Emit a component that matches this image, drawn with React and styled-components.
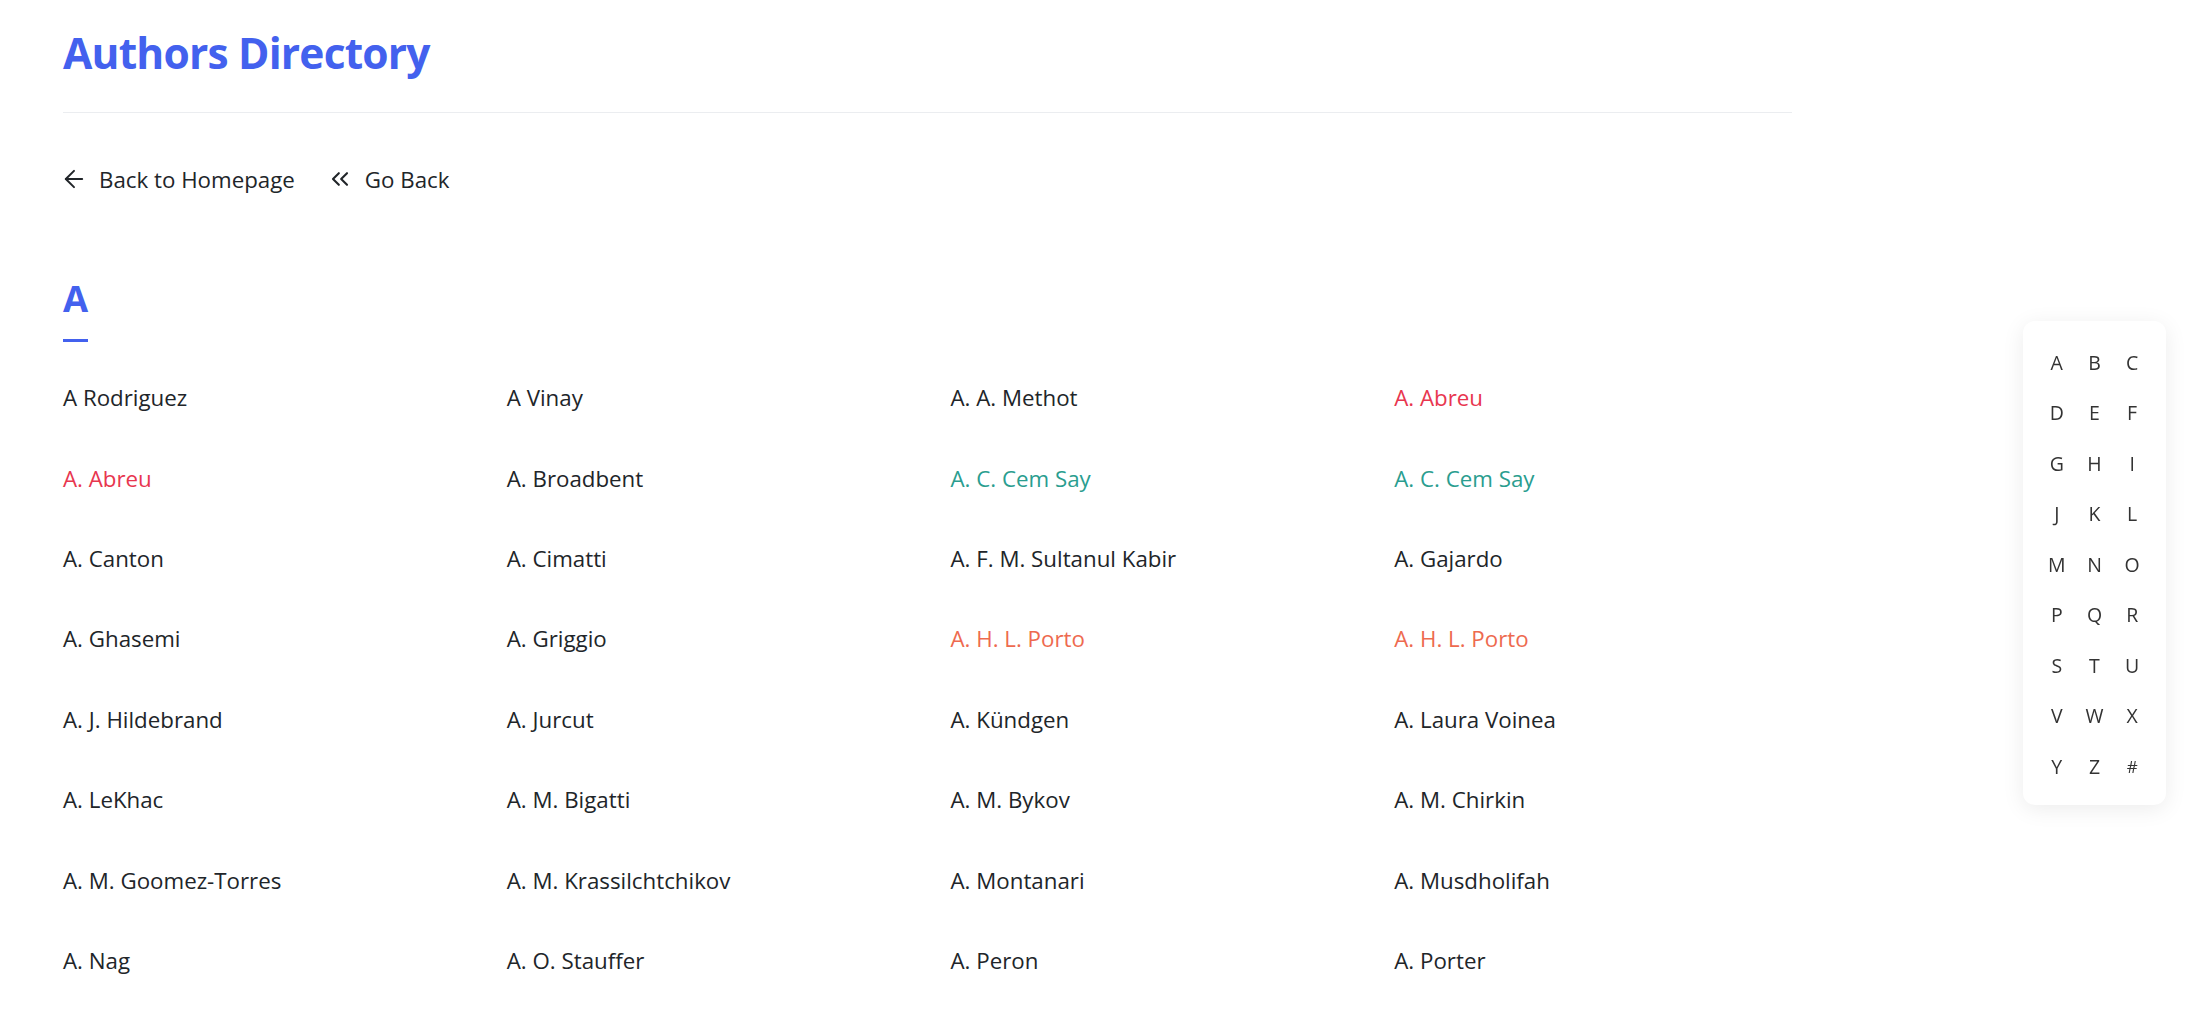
import React from 'react'
import styled, { createGlobalStyle } from 'styled-components'
import { ArrowLeft, ChevronsLeft } from 'lucide-react'

const GlobalStyle = createGlobalStyle`
  body {
    margin: 0;
    background: #fff;
    font-family: "Segoe UI", "Open Sans", "Noto Sans", sans-serif;
    color: #212529;
  }
`

const authors = [
  ['A Rodriguez'], ['A Vinay'], ['A. A. Methot'], ['A. Abreu', 'red'],
  ['A. Abreu', 'red'], ['A. Broadbent'], ['A. C. Cem Say', 'teal'], ['A. C. Cem Say', 'teal'],
  ['A. Canton'], ['A. Cimatti'], ['A. F. M. Sultanul Kabir'], ['A. Gajardo'],
  ['A. Ghasemi'], ['A. Griggio'], ['A. H. L. Porto', 'coral'], ['A. H. L. Porto', 'coral'],
  ['A. J. Hildebrand'], ['A. Jurcut'], ['A. Kündgen'], ['A. Laura Voinea'],
  ['A. LeKhac'], ['A. M. Bigatti'], ['A. M. Bykov'], ['A. M. Chirkin'],
  ['A. M. Goomez-Torres'], ['A. M. Krassilchtchikov'], ['A. Montanari'], ['A. Musdholifah'],
  ['A. Nag'], ['A. O. Stauffer'], ['A. Peron'], ['A. Porter'],
]

const letters = 'ABCDEFGHIJKLMNOPQRSTUVWXYZ#'.split('')

const tones = {
  red: '#e8364f',
  teal: '#2a9d8f',
  coral: '#ee6a4f',
}

function App() {
  return (
    <>
      <GlobalStyle />
      <Page>
        <Header>
          <Title>Authors Directory</Title>
        </Header>
        <Nav>
          <NavLink href="#">
            <ArrowLeft size={28} strokeWidth={1.7} />
            Back to Homepage
          </NavLink>
          <NavLink href="#">
            <ChevronsLeft size={28} strokeWidth={1.8} />
            Go Back
          </NavLink>
        </Nav>
        <Section>
          <LetterHeading>A</LetterHeading>
          <Bar />
          <Grid>
            {authors.map(([name, tone], i) => (
              <Author key={i} href="#" $tone={tone}>{name}</Author>
            ))}
          </Grid>
        </Section>
      </Page>
      <Jump>
        {letters.map(l => (
          <JumpLetter key={l} href="#" $small={l === '#'}>{l}</JumpLetter>
        ))}
      </Jump>
    </>
  )
}

export default App

const Page = styled.div`
  width: 1729px;
  padding: 26px 0 0 63px;
`

const Header = styled.header`
  padding-bottom: 32px;
  border-bottom: 1px solid #ebedf0;
`

const Title = styled.h1`
  margin: 0;
  font-size: 42.5px;
  line-height: 1.26;
  font-weight: 700;
  letter-spacing: -0.8px;
  color: #4361ee;
`

const Nav = styled.nav`
  display: flex;
  align-items: center;
  gap: 31px;
  margin-top: 50px;
  margin-left: -3px;
`

const NavLink = styled.a`
  display: flex;
  align-items: center;
  gap: 11px;
  font-size: 22.3px;
  line-height: 1.5;
  color: #212529;
  text-decoration: none;

  svg {
    color: #212529;
    flex-shrink: 0;
  }
`

const Section = styled.section`
  margin-top: 81px;
`

const LetterHeading = styled.h2`
  margin: 0;
  font-size: 36.4px;
  line-height: 1.2;
  font-weight: 700;
  color: #4361ee;
`

const Bar = styled.div`
  width: 25px;
  height: 3px;
  margin-top: 18px;
  background: #4361ee;
`

const Grid = styled.div`
  display: grid;
  grid-template-columns: repeat(4, 1fr);
  column-gap: 46px;
  row-gap: 47px;
  margin-top: 39.5px;
`

const Author = styled.a`
  font-size: 22.3px;
  line-height: 1.5;
  text-decoration: none;
  color: ${p => (p.$tone ? tones[p.$tone] : '#212529')};
  white-space: nowrap;
`

const Jump = styled.aside`
  position: fixed;
  top: 321px;
  right: 22px;
  display: grid;
  grid-template-columns: repeat(3, 37.7px);
  grid-auto-rows: 50.5px;
  padding: 16px 15px 13px;
  background: #fff;
  border-radius: 12px;
  box-shadow: 0 4px 22px rgba(0, 0, 0, 0.08);
`

const JumpLetter = styled.a`
  display: flex;
  align-items: center;
  justify-content: center;
  font-size: ${p => (p.$small ? '17px' : '19.5px')};
  color: #333;
  text-decoration: none;
`
